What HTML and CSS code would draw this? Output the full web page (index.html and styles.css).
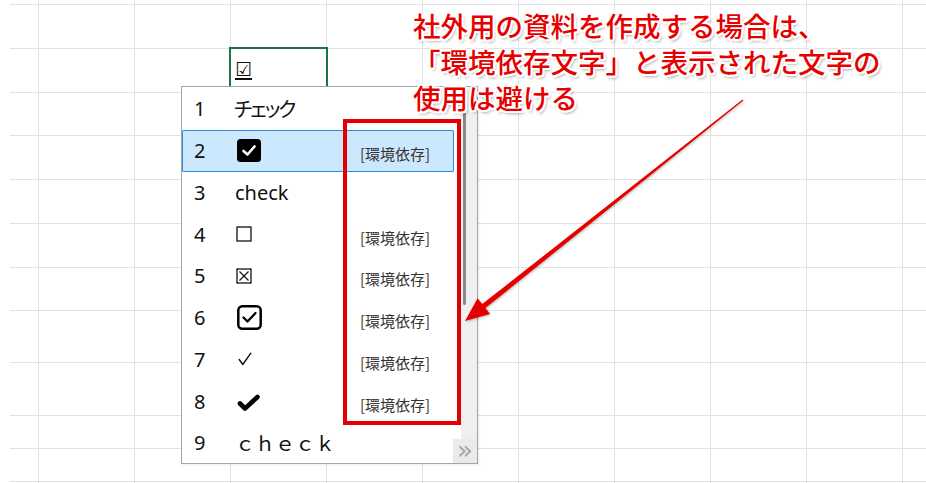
FILE: index.html
```html
<!DOCTYPE html>
<html lang="ja">
<head>
<meta charset="utf-8">
<title>環境依存文字</title>
<link rel="stylesheet" href="styles.css">
</head>
<body>
<div class="sheet">
  <div class="row h5"></div>
  <div class="row h44"></div>
  <div class="row h44"></div>
  <div class="row h43"></div>
  <div class="row h44"></div>
  <div class="row h44"></div>
  <div class="row h44"></div>
  <div class="row h43"></div>
  <div class="row h52"></div>
  <div class="row h53"></div>
  <div class="row h33"></div>
  <div class="row h33"></div>
</div>

<div class="cell"><span class="cell-val">☑</span></div>

<div class="dropdown">
  <ul class="list">
    <li class="item"><span class="num">1</span><span class="val palt">チェック</span><span class="tag"></span></li>
    <li class="item selected"><span class="num">2</span><span class="val"><svg class="ico ico-l" width="24" height="23" viewBox="0 0 24 23"><rect x="0" y="0" width="24" height="23" rx="3.5" fill="#000"/><path d="M6.5 12 L10.5 15.5 L17.5 7.5" stroke="#fff" stroke-width="2.6" fill="none" stroke-linecap="round" stroke-linejoin="round"/></svg></span><span class="tag">[環境依存]</span></li>
    <li class="item"><span class="num">3</span><span class="val">check</span><span class="tag"></span></li>
    <li class="item"><span class="num">4</span><span class="val"><svg class="ico ico-s" width="16" height="16" viewBox="0 0 16 16"><rect x="1" y="1" width="14" height="14" fill="none" stroke="#111" stroke-width="1.3"/></svg></span><span class="tag">[環境依存]</span></li>
    <li class="item"><span class="num">5</span><span class="val"><svg class="ico ico-s" width="16" height="16" viewBox="0 0 16 16"><rect x="1" y="1" width="14" height="14" fill="none" stroke="#111" stroke-width="1.3"/><path d="M3.5 3.5 L12.5 12.5 M12.5 3.5 L3.5 12.5" stroke="#111" stroke-width="1.2"/></svg></span><span class="tag">[環境依存]</span></li>
    <li class="item"><span class="num">6</span><span class="val"><svg class="ico ico-l" width="25" height="25" viewBox="0 0 25 25"><rect x="1.3" y="1.3" width="22.4" height="22.4" rx="4" fill="none" stroke="#000" stroke-width="2.5"/><path d="M6.5 12.5 L10.5 16.5 L18.5 8" stroke="#000" stroke-width="2.3" fill="none" stroke-linecap="round" stroke-linejoin="round"/></svg></span><span class="tag">[環境依存]</span></li>
    <li class="item"><span class="num">7</span><span class="val"><svg class="ico ico-t" width="14" height="14" viewBox="0 0 14 14"><path d="M1.2 7.5 L4.8 12.5 L12.8 1.2" stroke="#111" stroke-width="1.4" fill="none" stroke-linecap="round" stroke-linejoin="round"/></svg></span><span class="tag">[環境依存]</span></li>
    <li class="item"><span class="num">8</span><span class="val"><svg class="ico ico-h" width="23" height="18" viewBox="0 0 23 18"><path d="M3 9.5 L8 14.5 L20.5 3" stroke="#000" stroke-width="4.6" fill="none" stroke-linecap="round" stroke-linejoin="round"/></svg></span><span class="tag">[環境依存]</span></li>
    <li class="item"><span class="num">9</span><span class="val wide">ｃｈｅｃｋ</span><span class="tag"></span></li>
  </ul>
  <div class="track"><div class="thumb"></div></div>
  <div class="grip">»</div>
</div>

<div class="redbox"></div>

<div class="note">
  <span class="line">社外用の資料を作成する場合は、</span>
  <span class="line">「環境依存文字」と表示された文字の</span>
  <span class="line">使用は避ける</span>
</div>

<svg class="arrow" width="926" height="483" viewBox="0 0 926 483">
  <polygon points="742.6,99.5 482.2,304.1 477.6,298.3 465,321 490,313.9 485.4,308.1 743.4,100.5" fill="#e60000"/>
</svg>
</body>
</html>
```

FILE: styles.css
```css
html, body {
  margin: 0;
  padding: 0;
}
body {
  width: 926px;
  height: 483px;
  overflow: hidden;
  position: relative;
  background: #fff;
  font-family: "Noto Sans", "Noto Sans CJK JP", sans-serif;
  color: #111;
}

/* worksheet grid */
.sheet {
  width: 926px;
  height: 483px;
  background-image: linear-gradient(to right, #e1e1e1 1px, transparent 1px);
  background-size: 96px 100%;
  background-position: 38px 0;
  background-repeat: repeat-x;
}
.row {
  margin-left: 10px;
  border-bottom: 1px solid #e1e1e1;
  box-sizing: border-box;
}
.h5 { height: 5px; }
.h33 { height: 33px; }
.h43 { height: 43px; }
.h44 { height: 44px; }
.h52 { height: 52px; }
.h53 { height: 53px; }

/* active cell */
.cell {
  position: absolute;
  left: 229px;
  top: 47px;
  width: 99px;
  height: 46px;
  box-sizing: border-box;
  border: 2px solid #1f7244;
  padding: 10px 0 0 4px;
}
.cell-val {
  display: inline-block;
  font-family: "DejaVu Sans", sans-serif;
  font-size: 19px;
  line-height: 18px;
  text-decoration: underline;
  text-decoration-thickness: 2px;
  text-underline-offset: 2px;
  color: #111;
}

/* dropdown */
.dropdown {
  position: absolute;
  left: 181px;
  top: 86px;
  width: 297px;
  height: 378px;
  box-sizing: border-box;
  border: 1px solid #a5a5a5;
  background: #fff;
  display: flex;
  overflow: hidden;
  box-shadow: 1px 1px 2px rgba(0,0,0,0.08);
}
.list {
  list-style: none;
  margin: 0;
  padding: 1px 0 0 0;
  width: 279px;
  flex: none;
}
.item {
  height: 41.75px;
  width: 272px;
  box-sizing: border-box;
  border: 1px solid transparent;
  display: grid;
  grid-template-columns: 41px 125px auto;
  align-items: center;
  padding-left: 11px;
}
.item.selected {
  background: #cce8ff;
  border-color: #2b8ae0;
  border-radius: 1px;
}
.num {
  font-size: 20px;
  color: #111;
}
.val {
  font-size: 20px;
  display: flex;
  align-items: center;
  white-space: nowrap;
}
.palt {
  font-family: "Noto Sans CJK JP", sans-serif;
  font-feature-settings: "palt";
  letter-spacing: -2px;
  margin-left: -1px;
}
.wide {
  font-family: "Noto Sans CJK JP", sans-serif;
}
.ico { display: block; }
.ico-l { margin-left: 2px; }
.ico-s { margin-left: 1px; }
.ico-t { margin-left: 3px; }
.ico-h { margin-left: 2px; margin-top: 3px; }
.tag {
  font-family: "Noto Sans CJK JP", sans-serif;
  font-size: 15px;
  color: #333;
  padding-top: 6px;
  white-space: nowrap;
}

/* scrollbar */
.track {
  flex: 1;
  background: #efefef;
  padding: 1px 0 0 2px;
}
.thumb {
  width: 3px;
  height: 217px;
  background: #8a8a8a;
  border-radius: 2px;
}
.grip {
  position: absolute;
  right: 0;
  bottom: 0;
  width: 24px;
  height: 24px;
  background: #eaeaea;
  color: #a3a3a3;
  font-family: "DejaVu Sans", sans-serif;
  font-size: 26px;
  line-height: 22px;
  text-align: center;
}

/* annotation */
.redbox {
  position: absolute;
  left: 343px;
  top: 119px;
  width: 118px;
  height: 306px;
  box-sizing: border-box;
  border: 4px solid #e30000;
}
.note {
  position: absolute;
  left: 413px;
  top: 7px;
  font-family: "Noto Sans CJK JP", sans-serif;
  font-size: 27.5px;
  font-weight: 500;
  line-height: 36px;
  color: #e60000;
  white-space: nowrap;
  text-shadow:
    -2px 0 #fff, 2px 0 #fff, 0 -2px #fff, 0 2px #fff,
    -1.5px -1.5px #fff, 1.5px 1.5px #fff, -1.5px 1.5px #fff, 1.5px -1.5px #fff,
    2px 3px 3px rgba(0,0,0,0.35);
}
.line { display: block; }
.arrow {
  position: absolute;
  left: 0;
  top: 0;
  pointer-events: none;
  filter: drop-shadow(1px 1px 1px rgba(0,0,0,0.25));
}
```
